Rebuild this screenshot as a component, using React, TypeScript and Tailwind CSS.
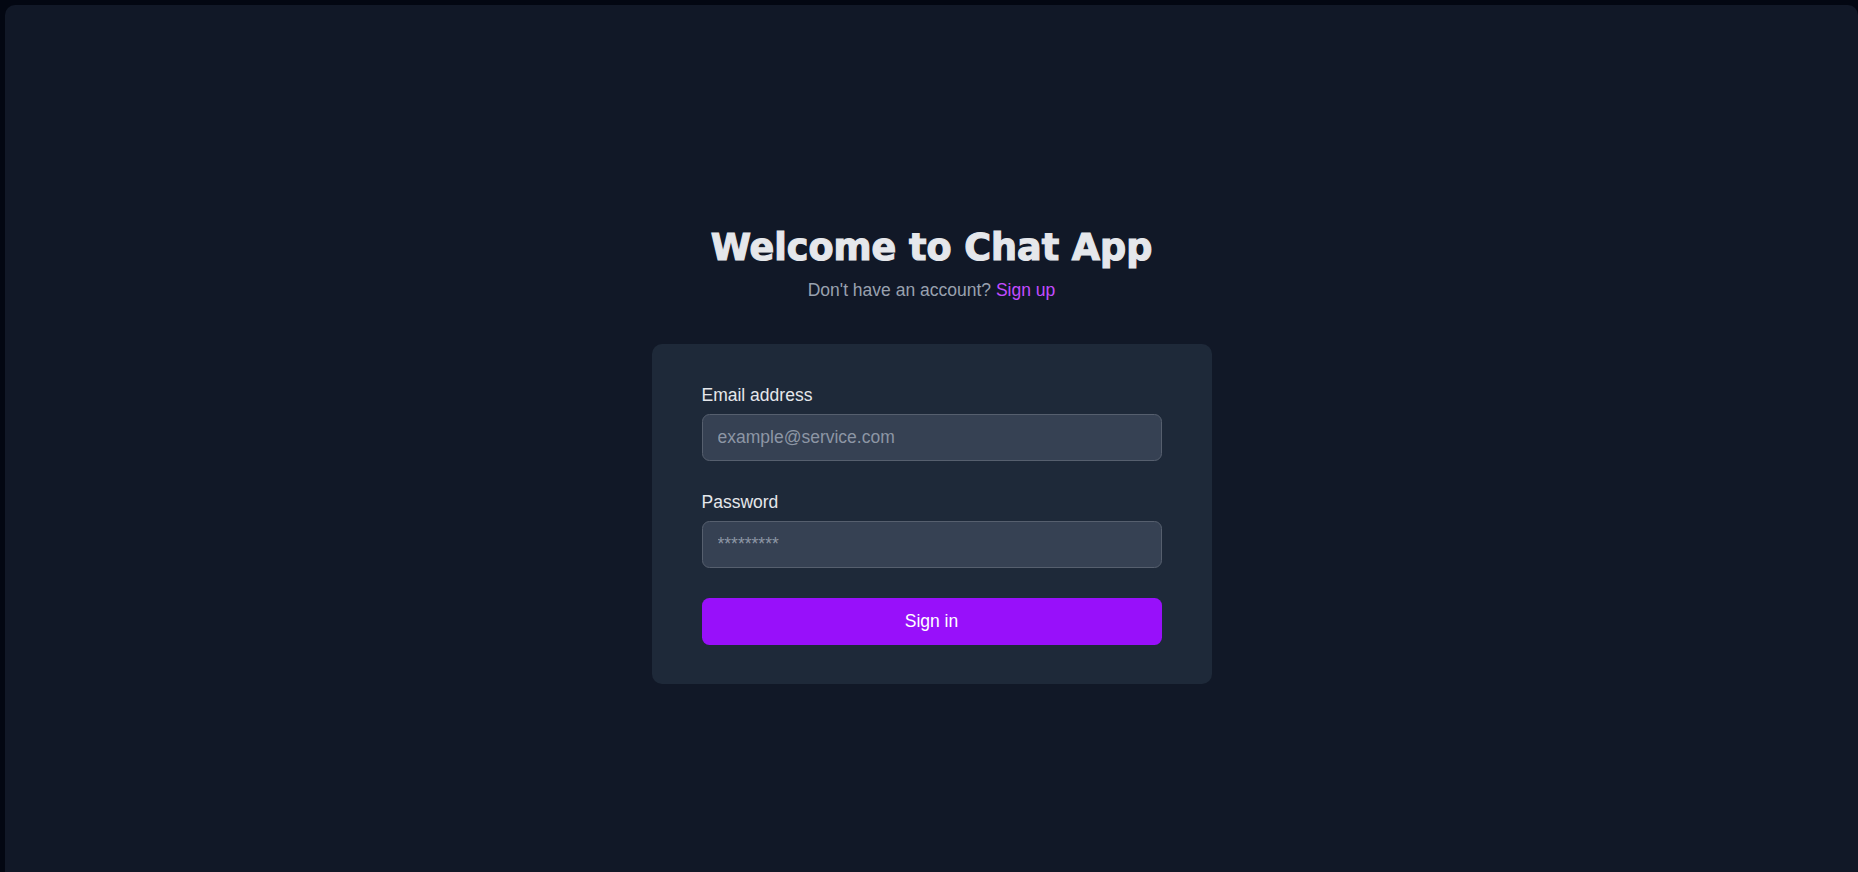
import React from "react";

export default function App() {
  return (
    <div
      className="h-[872px] w-full overflow-hidden bg-[#030712] pl-[5px] pt-[5px] flex"
      style={{ fontFamily: '"Liberation Sans", Arial, sans-serif' }}
    >
      <div className="flex-1 h-[880px] rounded-[10px] bg-[#111827] flex flex-col items-center pt-[220px]">
        <h1
          className="text-[36.5px] leading-[45px] font-bold text-[#e5e7eb] text-center [-webkit-text-stroke:1.2px_#e5e7eb]"
          style={{ fontFamily: '"DejaVu Sans", sans-serif' }}
        >
          Welcome to Chat App
        </h1>
        <p className="mt-[8px] text-[17.5px] leading-[25px] text-[#99a1af] text-center">
          Don't have an account?{" "}
          <a href="#" className="text-[#c24cff]">
            Sign up
          </a>
        </p>

        <div className="mt-[41px] w-[560px] rounded-[10px] bg-[#1e2939] px-[50px] pt-[39px] pb-[39px]">
          <form className="flex flex-col" onSubmit={(e) => e.preventDefault()}>
            <div className="flex flex-col">
              <label className="text-[17.5px] leading-[25px] text-[#e5e7eb] mb-[6px]">
                Email address
              </label>
              <input
                type="email"
                placeholder="example@service.com"
                className="h-[47px] w-full rounded-[7.5px] border border-[#565f6e] bg-[#364153] px-[15px] text-[17.5px] text-[#e5e7eb] placeholder:text-[#8d96a5] outline-none"
              />
            </div>
            <div className="flex flex-col mt-[29px]">
              <label className="text-[17.5px] leading-[25px] text-[#e5e7eb] mb-[6px]">
                Password
              </label>
              <input
                type="password"
                placeholder="*********"
                className="h-[47px] w-full rounded-[7.5px] border border-[#565f6e] bg-[#364153] px-[15px] text-[17.5px] text-[#e5e7eb] placeholder:text-[#8d96a5] outline-none"
              />
            </div>
            <button
              type="submit"
              className="mt-[30px] h-[47px] w-full rounded-[7.5px] bg-[#9810fa] text-[17.5px] text-white"
            >
              Sign in
            </button>
          </form>
        </div>
      </div>
    </div>
  );
}
